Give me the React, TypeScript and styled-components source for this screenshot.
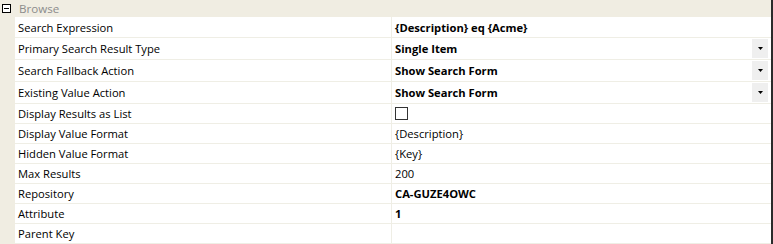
import styled, { createGlobalStyle } from "styled-components";

type Prop = {
  name: string;
  value?: string;
  bold?: boolean;
  dropdown?: boolean;
  checkbox?: boolean;
};

const props: Prop[] = [
  { name: "Search Expression", value: "{Description} eq {Acme}", bold: true },
  { name: "Primary Search Result Type", value: "Single Item", bold: true, dropdown: true },
  { name: "Search Fallback Action", value: "Show Search Form", bold: true, dropdown: true },
  { name: "Existing Value Action", value: "Show Search Form", bold: true, dropdown: true },
  { name: "Display Results as List", checkbox: true },
  { name: "Display Value Format", value: "{Description}" },
  { name: "Hidden Value Format", value: "{Key}" },
  { name: "Max Results", value: "200" },
  { name: "Repository", value: "CA-GUZE4OWC", bold: true },
  { name: "Attribute", value: "1", bold: true },
  { name: "Parent Key", value: "" },
];

const rowHeight = (p: Prop) => {
  if (p.dropdown) return 21;
  if (p.name === "Search Expression") return 20;
  return 19;
};

const App = () => {
  return (
    <>
      <GlobalStyle />
      <SGrid>
        <SCategory>
          <SExpander>
            <span />
          </SExpander>
          <SCategoryLabel>Browse</SCategoryLabel>
        </SCategory>
        {props.map((p) => (
          <SRow key={p.name} $height={rowHeight(p)}>
            <SGutter />
            <SName>{p.name}</SName>
            <SValue $bold={!!p.bold}>
              {p.checkbox ? <SCheck /> : <span>{p.value}</span>}
              {p.dropdown && (
                <SDropButton>
                  <svg width="5" height="3" viewBox="0 0 5 3">
                    <path d="M0 0h5L2.5 3z" fill="#000" />
                  </svg>
                </SDropButton>
              )}
            </SValue>
          </SRow>
        ))}
      </SGrid>
    </>
  );
};

const GlobalStyle = createGlobalStyle`
  html, body {
    margin: 0;
    padding: 0;
    background: #fff;
  }
  body {
    font-family: "Segoe UI", "Open Sans", "Noto Sans", sans-serif;
    font-size: 11.2px;
    color: #000;
  }
`;

const SGrid = styled.div`
  width: 771px;
  height: 244px;
  border-right: 2px solid #2b2b2b;
  background-color: #fff;
  overflow: hidden;
`;

const SCategory = styled.div`
  display: flex;
  align-items: center;
  height: 16px;
  background-color: #f0ede2;
  border-bottom: 1px solid #f0ede2;
`;

const SExpander = styled.div`
  width: 9px;
  height: 9px;
  margin-left: 2px;
  margin-right: 8px;
  border: 1px solid #000;
  background: #fff;
  display: flex;
  align-items: center;
  justify-content: center;
  box-sizing: border-box;
  & > span {
    width: 5px;
    height: 1px;
    background: #000;
  }
`;

const SCategoryLabel = styled.span`
  color: #8c8c8c;
  font-size: 11.6px;
`;

const SRow = styled.div<{ $height: number }>`
  display: grid;
  grid-template-columns: 15px 377px 1fr;
  height: ${(p) => p.$height}px;
  border-bottom: 1px solid #efeee5;
`;

const SGutter = styled.div`
  background-color: #f0ede2;
  margin-bottom: -1px;
`;

const SName = styled.div`
  display: flex;
  align-items: center;
  padding-left: 3px;
  border-right: 1px solid #efeee5;
  white-space: nowrap;
`;

const SValue = styled.div<{ $bold: boolean }>`
  display: flex;
  align-items: center;
  justify-content: space-between;
  padding-left: 3px;
  padding-right: 3px;
  font-weight: ${(p) => (p.$bold ? 700 : 400)};
  white-space: nowrap;
`;

const SCheck = styled.div`
  width: 13px;
  height: 13px;
  box-sizing: border-box;
  border: 1px solid #333;
  background: #fff;
`;

const SDropButton = styled.div`
  width: 16px;
  height: 19px;
  background-color: #efefef;
  display: flex;
  align-items: center;
  justify-content: center;
`;

export default App;
